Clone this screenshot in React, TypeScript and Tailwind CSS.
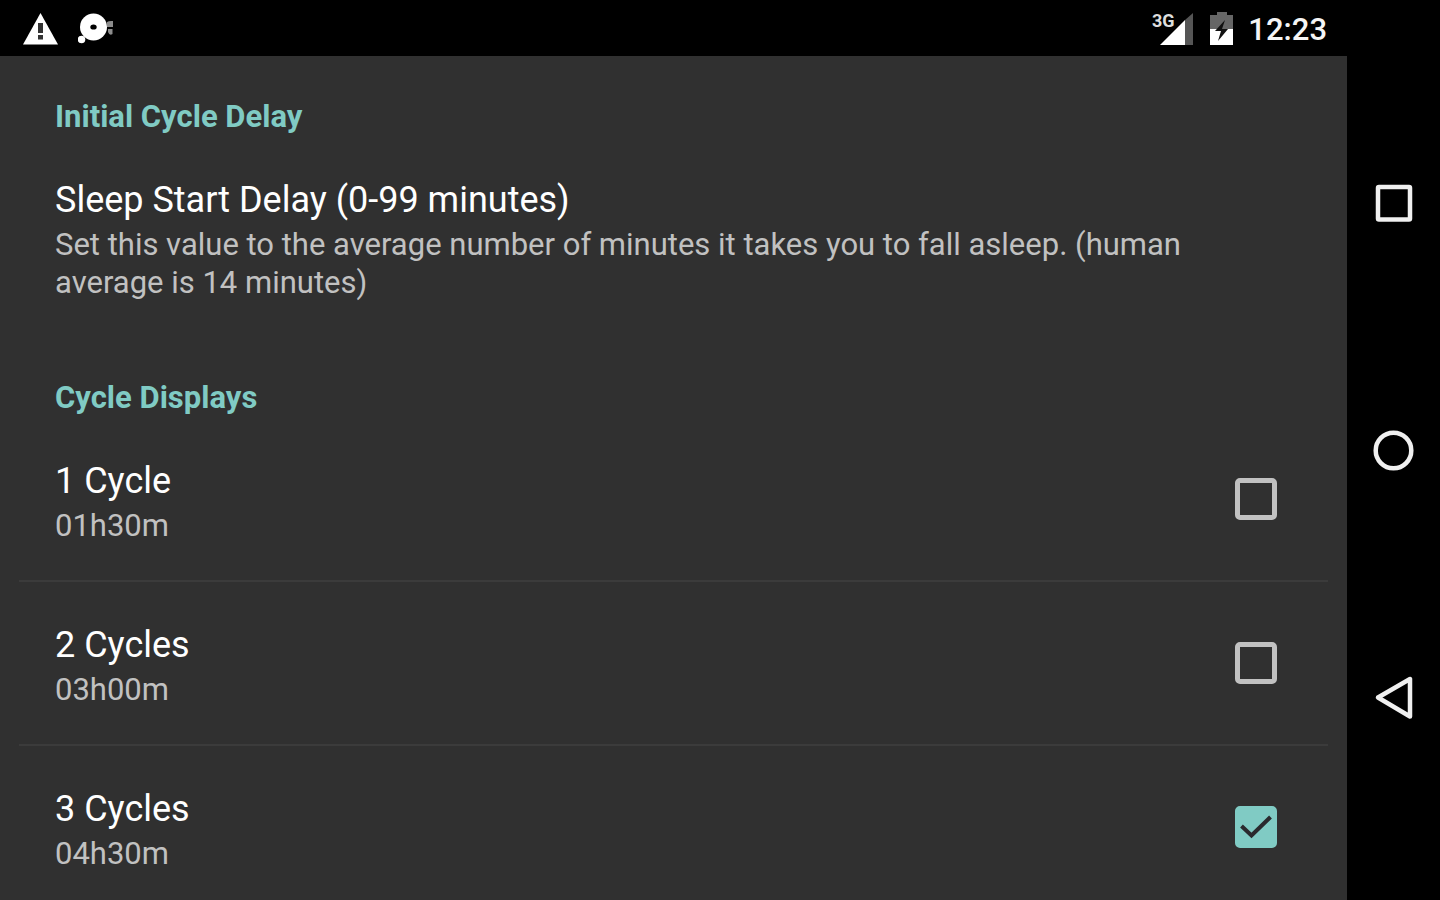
import { useState } from "react";

const initialCycles = [
  { id: "cycle-1", title: "1 Cycle", summary: "01h30m", checked: false },
  { id: "cycle-2", title: "2 Cycles", summary: "03h00m", checked: false },
  { id: "cycle-3", title: "3 Cycles", summary: "04h30m", checked: true },
];

function StatusBar() {
  return (
    <header className="flex h-14 shrink-0 items-center justify-between bg-black pr-5 pl-[23px]">
      <div className="flex items-center gap-5">
        <svg className="h-9 w-[35px]" viewBox="0 0 35 36" aria-label="Warning" role="img">
          <path d="M17.5 3 35 34.500H0Z" fill="#fff" />
          <path d="M15 13h5v10h-5ZM15 25h5v4.500h-5Z" fill="#333" />
        </svg>
        <svg className="h-9 w-[36px]" viewBox="0 0 36 36" aria-label="Debugging" role="img">
          <circle cx="15.500" cy="17" r="13.500" fill="#fff" />
          <ellipse cx="15.500" cy="17" rx="3.200" ry="2.600" fill="#000" />
          <circle cx="3.500" cy="29.500" r="3.800" fill="#fff" />
          <path d="M29 12q2-1.500 6-1v6h-6ZM30 19h4.500v5q-3 2-4.500-2Z" fill="#8c8c8c" />
        </svg>
      </div>
      <div className="flex items-center">
        <svg className="h-9 w-[42px]" viewBox="0 0 42 36" aria-label="3G signal" role="img">
          <path d="M41 3V35H33V10Z" fill="#555" />
          <path d="M33 10V35H8Z" fill="#fff" />
          <text
            x="0"
            y="17"
            fill="#ddd"
            stroke="#000"
            strokeWidth="1"
            paintOrder="stroke"
            fontSize="18"
            fontWeight="700"
            fontFamily="Roboto, sans-serif"
          >
            3G
          </text>
        </svg>
        <svg className="ml-4 h-9 w-6" viewBox="0 0 24 36" aria-label="Battery charging" role="img">
          <path d="M7 2h10v3h6v14H0V5h7Z" fill="#666" />
          <path d="M0 19h23v16H0Z" fill="#fff" />
          <path d="M15 10 5 21h6L8 31l10-12h-6Z" fill="#111" />
        </svg>
        <time className="ml-3.5 pt-1 text-[31px] leading-9 font-medium text-[#f5f5f5]">12:23</time>
      </div>
    </header>
  );
}

function CategoryTitle({ children }: { children: string }) {
  return (
    <h2 className="pt-[41px] pr-[70px] pl-[55px] text-[31px] leading-10 font-bold text-[#80cbc4]">{children}</h2>
  );
}

function NavigationBar() {
  return (
    <nav aria-label="System" className="flex w-[93px] shrink-0 flex-col items-center bg-black py-20">
      <button type="button" aria-label="Recent apps" className="flex w-full flex-1 items-center justify-center">
        <svg className="size-12" viewBox="0 0 48 48" fill="none" stroke="#f0f0f0" strokeWidth="4.500">
          <rect x="8" y="8" width="32" height="32.500" rx="1" />
        </svg>
      </button>
      <button type="button" aria-label="Home" className="flex w-full flex-1 items-center justify-center">
        <svg className="size-12" viewBox="0 0 48 48" fill="none" stroke="#f0f0f0" strokeWidth="4.500">
          <circle cx="23.500" cy="24.500" r="17.800" />
        </svg>
      </button>
      <button type="button" aria-label="Back" className="flex w-full flex-1 items-center justify-center">
        <svg
          className="size-12"
          viewBox="0 0 48 48"
          fill="none"
          stroke="#f0f0f0"
          strokeWidth="4.500"
          strokeLinejoin="round"
        >
          <path d="M8 24.500 40 6V43.500Z" />
        </svg>
      </button>
    </nav>
  );
}

export default function App() {
  const [cycles, setCycles] = useState(initialCycles);

  const toggle = (id: string) =>
    setCycles((all) => all.map((c) => (c.id === id ? { ...c, checked: !c.checked } : c)));

  return (
    <div className="flex h-screen overflow-hidden bg-black font-['Roboto',sans-serif]">
      <div className="flex min-w-0 flex-1 flex-col">
        <StatusBar />
        <main className="min-h-0 flex-1 overflow-hidden bg-[#303030]">
          <section>
            <CategoryTitle>Initial Cycle Delay</CategoryTitle>
            <button type="button" className="block w-full pt-[37px] pr-[70px] pb-[35px] pl-[55px] text-left">
              <span className="block text-[36px] leading-[52px] text-white">Sleep Start Delay (0-99 minutes)</span>
              <span className="block text-[31px] leading-[38px] text-[#c1c1c1]">
                Set this value to the average number of minutes it takes you to fall asleep. (human average is 14
                minutes)
              </span>
            </button>
          </section>
          <section>
            <CategoryTitle>Cycle Displays</CategoryTitle>
            <ul className="mx-[19px] divide-y-2 divide-[#3b3b3b]">
              {cycles.map((cycle) => (
                <li key={cycle.id}>
                  <label htmlFor={cycle.id} className="flex items-center justify-between pr-[51px] pl-9">
                    <span className="pt-[37px] pb-[35px]">
                      <span className="block text-[36px] leading-[52px] text-white">{cycle.title}</span>
                      <span className="block text-[31px] leading-[38px] text-[#c1c1c1]">{cycle.summary}</span>
                    </span>
                    <span className="grid">
                      <input
                        id={cycle.id}
                        type="checkbox"
                        checked={cycle.checked}
                        onChange={() => toggle(cycle.id)}
                        className="col-start-1 row-start-1 size-[42px] appearance-none rounded-[5px] border-5 border-[#c1c1c1] checked:border-[#80cbc4] checked:bg-[#80cbc4]"
                      />
                      {cycle.checked && (
                        <svg
                          className="pointer-events-none col-start-1 row-start-1 size-[42px]"
                          viewBox="0 0 42 42"
                          fill="none"
                          stroke="#2a2a2e"
                          strokeWidth="4"
                        >
                          <path d="M6.500 20 16.500 29.500 35.500 11" />
                        </svg>
                      )}
                    </span>
                  </label>
                </li>
              ))}
            </ul>
          </section>
        </main>
      </div>
      <NavigationBar />
    </div>
  );
}
